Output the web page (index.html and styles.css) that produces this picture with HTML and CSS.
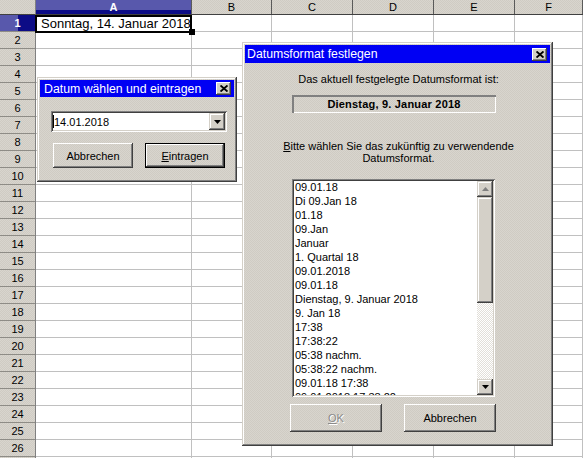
FILE: index.html
```html
<!DOCTYPE html>
<html lang="de">
<head>
<meta charset="utf-8">
<title>Datum</title>
<link rel="stylesheet" href="styles.css">
</head>
<body>
<div class="sheet">
  <div class="corner"></div>
  <div class="colheads">
    <div class="ch ch-a sel">A</div>
    <div class="ch ch-b">B</div>
    <div class="ch ch-c">C</div>
    <div class="ch ch-d">D</div>
    <div class="ch ch-e">E</div>
    <div class="ch ch-f">F</div>
  </div>
  <div class="rowheads">
    <div class="rh sel">1</div><div class="rh">2</div><div class="rh">3</div><div class="rh">4</div>
    <div class="rh">5</div><div class="rh">6</div><div class="rh">7</div><div class="rh">8</div>
    <div class="rh">9</div><div class="rh">10</div><div class="rh">11</div><div class="rh">12</div>
    <div class="rh">13</div><div class="rh">14</div><div class="rh">15</div><div class="rh">16</div>
    <div class="rh">17</div><div class="rh">18</div><div class="rh">19</div><div class="rh">20</div>
    <div class="rh">21</div><div class="rh">22</div><div class="rh">23</div><div class="rh">24</div>
    <div class="rh">25</div><div class="rh">26</div>
  </div>
  <div class="cells">
    <div class="col ch-a"></div>
    <div class="col ch-b"></div>
    <div class="col ch-c"></div>
    <div class="col ch-d"></div>
    <div class="col ch-e"></div>
    <div class="col ch-f"></div>
    <div class="a1">Sonntag, 14. Januar 2018<span class="handle"></span></div>
  </div>
</div>

<div class="win win-pick">
  <div class="title">
    <span>Datum wählen und eintragen</span>
    <span class="close"><svg width="8" height="7" viewBox="0 0 8 7"><path d="M0.5 0.5 L7.5 6.5 M7.5 0.5 L0.5 6.5" stroke="#000" stroke-width="1.9" fill="none"/></svg></span>
  </div>
  <div class="pick-body">
    <div class="combo">
      <span class="combo-text"><span class="caret"></span>14.01.2018</span>
      <span class="drop"><svg width="7" height="4" viewBox="0 0 7 4"><path d="M0 0 H7 L3.5 4 Z" fill="#000"/></svg></span>
    </div>
    <div class="btnrow">
      <button class="btn btn-s">Abbrechen</button>
      <button class="btn btn-s default"><u>E</u>intragen</button>
    </div>
  </div>
</div>

<div class="win win-format">
  <div class="title">
    <span>Datumsformat festlegen</span>
    <span class="close"><svg width="8" height="7" viewBox="0 0 8 7"><path d="M0.5 0.5 L7.5 6.5 M7.5 0.5 L0.5 6.5" stroke="#000" stroke-width="1.9" fill="none"/></svg></span>
  </div>
  <div class="fmt-body">
    <p class="lbl">Das aktuell festgelegte Datumsformat ist:</p>
    <div class="current">Dienstag, 9. Januar 2018</div>
    <p class="lbl lbl-2"><u>B</u>itte wählen Sie das zukünftig zu verwendende<br>Datumsformat.</p>
    <div class="listbox">
      <ul class="items">
        <li>09.01.18</li>
        <li>Di 09.Jan 18</li>
        <li>01.18</li>
        <li>09.Jan</li>
        <li>Januar</li>
        <li>1. Quartal 18</li>
        <li>09.01.2018</li>
        <li>09.01.18</li>
        <li>Dienstag, 9. Januar 2018</li>
        <li>9. Jan 18</li>
        <li>17:38</li>
        <li>17:38:22</li>
        <li>05:38 nachm.</li>
        <li>05:38:22 nachm.</li>
        <li>09.01.18 17:38</li>
        <li>09.01.2018 17:38:22</li>
      </ul>
      <div class="vscroll">
        <span class="sbtn"><svg width="7" height="4" viewBox="0 0 7 4"><path d="M0 4 H7 L3.5 0 Z" fill="#808080"/></svg></span>
        <div class="track"><div class="thumb"></div></div>
        <span class="sbtn"><svg width="7" height="4" viewBox="0 0 7 4"><path d="M0 0 H7 L3.5 4 Z" fill="#000"/></svg></span>
      </div>
    </div>
    <div class="fmt-btns">
      <button class="btn btn-l disabled"><u>O</u>K</button>
      <button class="btn btn-l">Abbrechen</button>
    </div>
  </div>
</div>
</body>
</html>
```

FILE: styles.css
```css
* { box-sizing: border-box; margin: 0; padding: 0; }

html, body {
  width: 583px;
  height: 458px;
  overflow: hidden;
  background: #fff;
}

body {
  position: relative;
  font-family: "Liberation Sans", Arial, sans-serif;
  font-size: 11px;
  color: #000;
}

/* ---------- spreadsheet ---------- */
.sheet {
  display: grid;
  grid-template-columns: 36px 547px;
  grid-template-rows: 15px 443px;
}

.corner,
.colheads,
.rowheads {
  background-color: #d4d0c8;
  background-image: repeating-conic-gradient(#d8d5ce 0 25%, #cfcbc3 0 50%);
  background-size: 2px 2px;
}

.corner {
  border-right: 1px solid #808080;
  border-bottom: 1px solid #404040;
}

.colheads {
  display: flex;
  border-bottom: 1px solid #404040;
}

.ch {
  height: 14px;
  line-height: 14px;
  text-align: center;
  border-right: 1px solid #5a5a5a;
  font-size: 11px;
}

.ch-a { width: 156px; }
.ch-b { width: 80px; }
.ch-c { width: 81px; }
.ch-d { width: 81px; }
.ch-e { width: 81px; }
.ch-f { flex: 1; }

.ch.sel {
  background: linear-gradient(to bottom, #5858ac 0 10px, #0c0c86 10px);
  color: #fff;
  font-weight: bold;
}

.rowheads {
  display: flex;
  flex-direction: column;
  border-right: 1px solid #808080;
}

.rh {
  height: 17px;
  line-height: 16px;
  text-align: center;
  border-bottom: 1px solid #8e8c86;
  font-size: 11px;
}

.rh.sel {
  background: linear-gradient(to right, #5858ac 0 18px, #0c0c86 18px);
  color: #fff;
  font-weight: bold;
}

.cells {
  position: relative;
  display: flex;
}

.col {
  height: 100%;
  border-right: 1px solid #c0c0c0;
  background: repeating-linear-gradient(to bottom, transparent 0 16px, #c0c0c0 16px 17px);
}

.a1 {
  position: absolute;
  left: -1px;
  top: 0;
  width: 157px;
  height: 18px;
  border: 2px solid #000;
  background: #fff;
  padding-left: 4px;
  font-size: 13px;
  line-height: 14px;
  white-space: nowrap;
}

.handle {
  position: absolute;
  left: 152px;
  top: 12px;
  width: 6px;
  height: 6px;
  background: #000;
}

/* ---------- windows ---------- */
.win {
  position: absolute;
  padding: 3px;
  background-color: #d4d0c8;
  background-image: repeating-conic-gradient(#d8d5ce 0 25%, #cfcbc3 0 50%);
  background-size: 2px 2px;
  box-shadow:
    inset -1px -1px #404040,
    inset 1px 1px #d4d0c8,
    inset -2px -2px #808080,
    inset 2px 2px #fff;
}

.win-pick {
  left: 37px;
  top: 77px;
  width: 200px;
  height: 105px;
}

.win-format {
  left: 242px;
  top: 42px;
  width: 311px;
  height: 404px;
}

.title {
  height: 17px;
  background: #0000f4;
  color: #fff;
  font-size: 12.3px;
  display: flex;
  align-items: center;
  justify-content: space-between;
  padding: 0 3px 0 4px;
  white-space: nowrap;
}

.win-format .title {
  padding-left: 2px;
  height: 18px;
}

.close {
  width: 15px;
  height: 13px;
  background: #d4d0c8;
  display: flex;
  align-items: center;
  justify-content: center;
  box-shadow:
    inset -1px -1px #404040,
    inset 1px 1px #fff,
    inset -2px -2px #808080;
}

/* ---------- pick dialog ---------- */
.pick-body {
  padding: 14px 0 0 11px;
}

.combo {
  width: 176px;
  height: 21px;
  background: #fff;
  display: flex;
  align-items: stretch;
  padding: 2px;
  box-shadow:
    inset 1px 1px #808080,
    inset -1px -1px #fff,
    inset 2px 2px #404040,
    inset -2px -2px #d4d0c8;
}

.combo-text {
  flex: 1;
  display: flex;
  align-items: center;
  font-size: 11px;
}

.caret {
  width: 1px;
  height: 13px;
  background: #000;
}

.drop {
  width: 16px;
  background: #d4d0c8;
  display: flex;
  align-items: center;
  justify-content: center;
  box-shadow:
    inset -1px -1px #404040,
    inset 1px 1px #d4d0c8,
    inset -2px -2px #808080,
    inset 2px 2px #fff;
}

.btnrow {
  display: flex;
  gap: 12px;
  margin: 11px 0 0 2px;
}

.btn {
  font-family: "Liberation Sans", Arial, sans-serif;
  font-size: 11px;
  color: #000;
  border: 0;
  background-color: #d4d0c8;
  background-image: repeating-conic-gradient(#d8d5ce 0 25%, #cfcbc3 0 50%);
  background-size: 2px 2px;
  display: flex;
  align-items: center;
  justify-content: center;
  box-shadow:
    inset -1px -1px #404040,
    inset 1px 1px #fff,
    inset -2px -2px #808080;
}

.btn-s {
  width: 80px;
  height: 25px;
}

.btn.default {
  box-shadow:
    inset 0 0 0 1px #000,
    inset -2px -2px #404040,
    inset 2px 2px #fff,
    inset -3px -3px #808080;
}

.btn-l {
  width: 92px;
  height: 28px;
}

.btn.disabled {
  color: #8a8a8a;
  text-shadow: 1px 1px #fff;
}

/* ---------- format dialog ---------- */
.fmt-body {
  display: flex;
  flex-direction: column;
}

.lbl {
  text-align: center;
  line-height: 12px;
  margin-top: 10px;
  padding-left: 2px;
}

.lbl-2 {
  margin-top: 27px;
}

.current {
  margin: 10px 0 0 47px;
  width: 204px;
  height: 18px;
  text-align: center;
  font-weight: bold;
  font-size: 11px;
  line-height: 18px;
  letter-spacing: 0.2px;
  box-shadow:
    inset 1px 1px #808080,
    inset 2px 2px #808080,
    inset -1px -1px #fff;
}

.listbox {
  margin: 15px 0 0 47px;
  width: 203px;
  height: 218px;
  background: #fff;
  padding: 2px;
  display: flex;
  box-shadow:
    inset 1px 1px #808080,
    inset -1px -1px #fff,
    inset 2px 2px #404040,
    inset -2px -2px #d4d0c8;
}

.items {
  list-style: none;
  flex: 1;
  overflow: hidden;
  padding-left: 1px;
}

.items li {
  height: 14px;
  line-height: 13px;
  white-space: nowrap;
}

.vscroll {
  width: 16px;
  display: flex;
  flex-direction: column;
}

.sbtn {
  height: 16px;
  background: #d4d0c8;
  display: flex;
  align-items: center;
  justify-content: center;
  box-shadow:
    inset -1px -1px #404040,
    inset 1px 1px #d4d0c8,
    inset -2px -2px #808080,
    inset 2px 2px #fff;
}

.track {
  flex: 1;
  background-color: #eceae6;
  background-image: repeating-conic-gradient(#e2dfd9 0 25%, #fff 0 50%);
  background-size: 2px 2px;
}

.thumb {
  height: 106px;
  background: #d4d0c8;
  box-shadow:
    inset -1px -1px #404040,
    inset 1px 1px #d4d0c8,
    inset -2px -2px #808080,
    inset 2px 2px #fff;
}

.fmt-btns {
  display: flex;
  gap: 22px;
  margin: 7px 0 0 45px;
}
```
